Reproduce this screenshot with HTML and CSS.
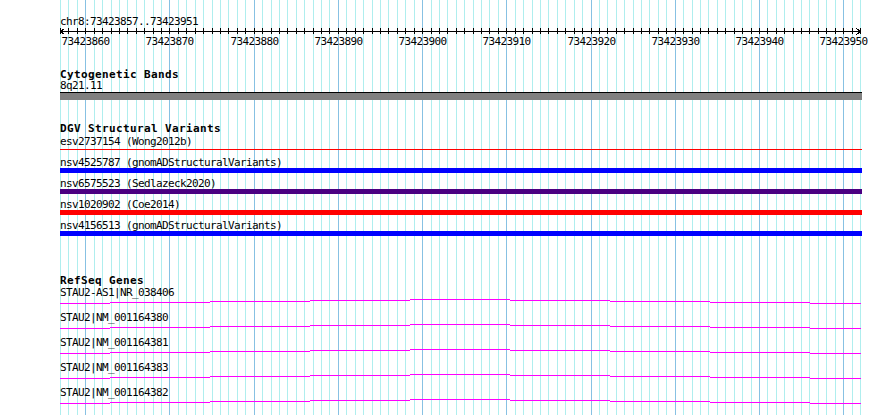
FILE: index.html
```html
<!DOCTYPE html>
<html lang="en">
<head>
  <meta charset="UTF-8">
  <title>chr8:73423857..73423951</title>
  <link rel="stylesheet" href="styles.css">
</head>
<body>

<div id="panel">
  <svg id="grid" width="890" height="415"></svg>

  <div class="tracks">
    <div class="track">
      <svg id="ruler" class="track-body" width="890" height="56">
        <text class="label" x="60" y="25">chr8:73423857..73423951</text>
        <rect class="ink" x="60" y="31" width="801" height="1"/>
        <path class="arrow" d="M64.5 28.5 L60.5 31.5 L64.5 34.5 M856.5 28.5 L860.5 31.5 L856.5 34.5"/>
      </svg>
    </div>

    <div class="track track-cyto">
      <div class="track-title">Cytogenetic Bands</div>
      <svg class="track-body" width="890" height="20">
        <text class="label" x="60" y="8">8q21.11</text>
        <rect class="ink" x="60" y="11" width="802" height="1"/>
        <rect class="band" x="60" y="12" width="802" height="7"/>
      </svg>
    </div>

    <div class="track track-dgv">
      <div class="track-title">DGV Structural Variants</div>
      <svg class="track-body" width="890" height="102">
        <text class="label" x="60" y="10">esv2737154 (Wong2012b)</text>
        <rect class="sv-red" x="60" y="14" width="802" height="1"/>
        <text class="label" x="60" y="31">nsv4525787 (gnomADStructuralVariants)</text>
        <rect class="sv-blue" x="60" y="33" width="802" height="5"/>
        <text class="label" x="60" y="52">nsv6575523 (Sedlazeck2020)</text>
        <rect class="sv-purple" x="60" y="54" width="802" height="5"/>
        <text class="label" x="60" y="73">nsv1020902 (Coe2014)</text>
        <rect class="sv-red" x="60" y="75" width="802" height="5"/>
        <text class="label" x="60" y="94">nsv4156513 (gnomADStructuralVariants)</text>
        <rect class="sv-blue" x="60" y="96" width="802" height="5"/>
      </svg>
    </div>

    <div class="track track-refseq">
      <div class="track-title">RefSeq Genes</div>
      <svg id="genes" class="track-body" width="890" height="128">
        <text class="label" x="60" y="9">STAU2-AS1|NR_038406</text>
        <text class="label" x="60" y="34">STAU2|NM_001164380</text>
        <text class="label" x="60" y="59">STAU2|NM_001164381</text>
        <text class="label" x="60" y="84">STAU2|NM_001164383</text>
        <text class="label" x="60" y="109">STAU2|NM_001164382</text>
      </svg>
    </div>
  </div>
</div>

<script>
  var SVGNS = 'http://www.w3.org/2000/svg';
  var iStart = 73423857;
  var iBases = 95;
  var iLeft = 60;
  var iWidth = 800;

  // pixel column of a base
  function baseX(i) {
      return Math.round(iLeft + i * iWidth / iBases);
  }

  function addRect(parent, x, y, w, h, cls) {
      var oRect = document.createElementNS(SVGNS, 'rect');
      oRect.setAttribute('x', x);
      oRect.setAttribute('y', y);
      oRect.setAttribute('width', w);
      oRect.setAttribute('height', h);
      oRect.setAttribute('class', cls);
      parent.appendChild(oRect);
  }

  // grid + ruler ticks
  var oGrid = document.getElementById('grid');
  var oRuler = document.getElementById('ruler');
  for (var i = 0; i <= iBases; i++) {
      var bMajor = (iStart + i) % 10 === 0;
      addRect(oGrid, baseX(i), 0, 1, 415, bMajor ? 'grid-major' : 'grid-minor');
      addRect(oRuler, baseX(i), 28, 1, 6, 'ink');
      if (bMajor) {
          var oText = document.createElementNS(SVGNS, 'text');
          oText.setAttribute('x', baseX(i) + 0.5);
          oText.setAttribute('y', 45);
          oText.setAttribute('class', 'label tick-label');
          oText.textContent = iStart + i;
          oRuler.appendChild(oText);
      }
  }

  // introns: very flat hat, one pixel per 100px
  var aSteps = [
      [60, 110, 4], [110, 210, 3], [210, 310, 2], [310, 410, 1], [410, 510, 0],
      [510, 610, 1], [610, 710, 2], [710, 810, 3], [810, 861, 4]
  ];
  var oGenes = document.getElementById('genes');
  for (var row = 0; row < 5; row++) {
      for (var j = 0; j < aSteps.length; j++) {
          var s = aSteps[j];
          addRect(oGenes, s[0], 12 + row * 25 + s[2], s[1] - s[0], 1, 'intron');
      }
  }
</script>
</body>
</html>
```

FILE: styles.css
```css
* {
    margin: 0;
    padding: 0;
}

body {
    background: #fff;
    color: #000;
}

#panel {
    position: relative;
    width: 890px;
    height: 415px;
    overflow: hidden;
}

#grid {
    position: absolute;
    left: 0;
    top: 0;
}

.tracks {
    position: relative;
}

.track-body {
    display: block;
    overflow: visible;
    shape-rendering: crispEdges;
}

.track-title {
    padding-left: 60px;
    font-family: "DejaVu Sans Mono", monospace;
    font-weight: bold;
    font-size: 11px;
    letter-spacing: 0.38px;
    line-height: 13px;
    height: 13px;
}

.track-cyto {
    margin-top: 12px;
}

.track-dgv {
    margin-top: 21px;
}

.track-refseq {
    margin-top: 37px;
}

.label {
    font-family: "DejaVu Sans Mono", monospace;
    font-size: 11px;
    letter-spacing: -0.62px;
    fill: #000;
}

.tick-label {
    text-anchor: middle;
}

.grid-minor {
    fill: #afeeee;
}

.grid-major {
    fill: #87c1e3;
}

.ink {
    fill: #000;
}

.arrow {
    fill: none;
    stroke: #000;
    stroke-width: 1;
}

.band {
    fill: #808080;
}

.sv-red {
    fill: #ff0000;
}

.sv-blue {
    fill: #0000ff;
}

.sv-purple {
    fill: #4b0082;
}

.intron {
    fill: #ff00ff;
}
```
